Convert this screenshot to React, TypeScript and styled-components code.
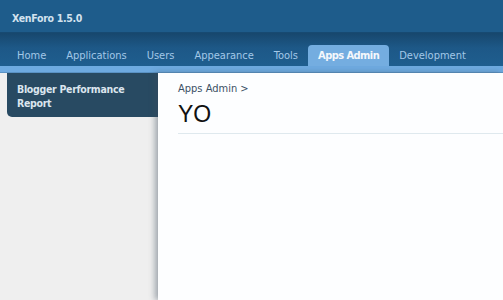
import React from "react";
import styled, { createGlobalStyle } from "styled-components";

const GlobalStyle = createGlobalStyle`
  html, body {
    margin: 0;
    padding: 0;
    height: 100%;
    background: #efefef;
    overflow: hidden;
  }
  #root {
    height: 100%;
  }
`;

const FONT = `"DejaVu Sans Condensed", "DejaVu Sans", Verdana, sans-serif`;

const Page = styled.div`
  height: 100%;
  display: flex;
  flex-direction: column;
  font-family: ${FONT};
`;

const TopBar = styled.div`
  height: 32px;
  background: #1e5c8b;
  border-bottom: 1px solid #174a72;
  display: flex;
  align-items: center;
  padding-left: 12px;
`;

const Title = styled.div`
  color: #d3e2ef;
  font-size: 10.5px;
  font-weight: bold;
  letter-spacing: -0.3px;
  padding-top: 4px;
`;

const NavBar = styled.div`
  height: 33px;
  background: linear-gradient(#17476d 0%, #1d5887 45%, #1f5e8f 100%);
  display: flex;
  align-items: flex-end;
  padding-left: 7px;
`;

const Tab = styled.div<{ $active?: boolean }>`
  height: 21px;
  padding: 0 10px;
  display: flex;
  align-items: center;
  font-size: 11px;
  border-radius: 4px 4px 0 0;
  color: ${(p) => (p.$active ? "#f4f8fc" : "#a3c8e8")};
  font-weight: ${(p) => (p.$active ? "bold" : "normal")};
  letter-spacing: ${(p) => (p.$active ? "-0.55px" : "0")};
  background: ${(p) => (p.$active ? "#74ade0" : "transparent")};
`;

const Strip = styled.div`
  height: 6px;
  background: #6eaae0;
  border-bottom: 1px solid #5a92c4;
`;

const Body = styled.div`
  flex: 1;
  display: flex;
  min-height: 0;
`;

const Sidebar = styled.div`
  width: 158px;
  flex-shrink: 0;
  padding-left: 7px;
  box-sizing: border-box;
`;

const SideItem = styled.div`
  background: #284a62;
  color: #dbe5ee;
  font-size: 10.5px;
  font-weight: bold;
  letter-spacing: -0.3px;
  line-height: 14px;
  padding: 9px 10px 7px 10px;
  border-radius: 0 0 0 5px;
`;

const Content = styled.div`
  flex: 1;
  background: #fdfeff;
  box-shadow: -3px 0 6px rgba(60, 75, 90, 0.45);
  padding: 9px 0 0 20px;
  position: relative;
`;

const Breadcrumb = styled.div`
  font-size: 11px;
  color: #3b5064;
`;

const Heading = styled.h1`
  margin: 4px 0 0;
  font-family: "Liberation Sans", Arial, sans-serif;
  font-weight: normal;
  font-size: 23px;
  line-height: 30px;
  color: #111;
  padding-bottom: 4px;
  border-bottom: 1px solid #dfe9ee;
`;

const tabs = [
  "Home",
  "Applications",
  "Users",
  "Appearance",
  "Tools",
  "Apps Admin",
  "Development",
];

export default function App() {
  return (
    <Page>
      <GlobalStyle />
      <TopBar>
        <Title>XenForo 1.5.0</Title>
      </TopBar>
      <NavBar>
        {tabs.map((t) => (
          <Tab key={t} $active={t === "Apps Admin"}>
            {t}
          </Tab>
        ))}
      </NavBar>
      <Strip />
      <Body>
        <Sidebar>
          <SideItem>
            Blogger Performance
            <br />
            Report
          </SideItem>
        </Sidebar>
        <Content>
          <Breadcrumb>Apps Admin &gt;</Breadcrumb>
          <Heading>YO</Heading>
        </Content>
      </Body>
    </Page>
  );
}
